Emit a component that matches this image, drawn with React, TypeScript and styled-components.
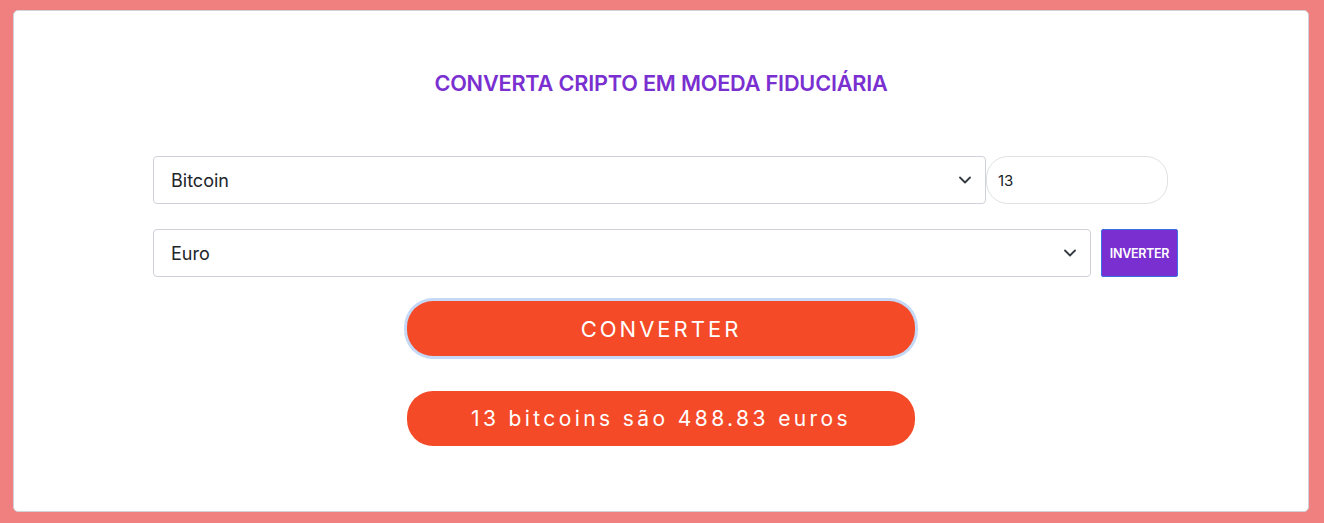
import React from "react";
import styled, { createGlobalStyle } from "styled-components";

const Global = createGlobalStyle`
  html, body { margin: 0; padding: 0; }
  body {
    background: #f08080;
    font-family: Inter, "Noto Sans", sans-serif;
  }
`;

const Page = styled.div`
  padding: 10px 15px 11px 13px;
  height: 523px;
  box-sizing: border-box;
`;

const Card = styled.main`
  background: #fff;
  border: 1px solid #cfd2d6;
  border-radius: 5px;
  height: 100%;
  box-sizing: border-box;
  display: flex;
  flex-direction: column;
  align-items: center;
  padding-top: 59px;
`;

const Heading = styled.h1`
  margin: 0;
  font-size: 21.7px;
  line-height: 26px;
  font-weight: 600;
  color: #7a2fd0;
  letter-spacing: -0.2px;
`;

const Form = styled.div`
  align-self: flex-start;
  margin-left: 139px;
  width: 1015px;
  margin-top: 60px;
  display: flex;
  flex-direction: column;
  gap: 25px;
`;

const Row = styled.div<{ $w: number }>`
  display: flex;
  width: ${(p) => p.$w}px;
  gap: ${(p) => (p.$w > 1015 ? 10 : 0)}px;
`;

const SelectBox = styled.div<{ $w: number }>`
  width: ${(p) => p.$w}px;
  height: 48px;
  box-sizing: border-box;
  border: 1px solid #cfd2da;
  border-radius: 4px;
  display: flex;
  align-items: center;
  justify-content: space-between;
  padding: 0 14px 0 17px;
  font-size: 18px;
  color: #212529;
`;

const Amount = styled.div`
  width: 182px;
  height: 48px;
  box-sizing: border-box;
  border: 1px solid #dfe1e5;
  border-radius: 22px;
  display: flex;
  align-items: center;
  padding-left: 11px;
  font-size: 15px;
  color: #212529;
`;

const Invert = styled.button`
  width: 77px;
  height: 48px;
  background: #7a2fd0;
  border: 1px solid #3b6fe8;
  border-radius: 2px;
  color: #fff;
  font-family: Inter, sans-serif;
  font-size: 12.5px;
  font-weight: 600;
  letter-spacing: -0.3px;
  padding: 0;
`;

const Pill = styled.div<{ $focus?: boolean }>`
  width: 508px;
  height: 55px;
  box-sizing: border-box;
  background: #f44a28;
  border-radius: 26px;
  color: #fff;
  display: flex;
  align-items: center;
  justify-content: center;
  font-size: ${(p) => (p.$focus ? 22 : 21)}px;
  letter-spacing: ${(p) => (p.$focus ? 3 : 3.4)}px;
  box-shadow: ${(p) => (p.$focus ? "0 0 0 3px #c5d9f7" : "none")};
  margin-top: ${(p) => (p.$focus ? 24 : 35)}px;
`;

const Chevron = () => (
  <svg width="12" height="8" viewBox="0 0 12 8" fill="none">
    <path d="M1 1.5l5 5 5-5" stroke="#343a40" strokeWidth="1.8" strokeLinecap="round" strokeLinejoin="round" />
  </svg>
);

export default function App() {
  return (
    <>
      <Global />
      <Page>
        <Card>
          <Heading>CONVERTA CRIPTO EM MOEDA FIDUCIÁRIA</Heading>
          <Form>
            <Row $w={1015}>
              <SelectBox $w={833}>
                <span>Bitcoin</span>
                <Chevron />
              </SelectBox>
              <Amount>13</Amount>
            </Row>
            <Row $w={1025}>
              <SelectBox $w={938}>
                <span>Euro</span>
                <Chevron />
              </SelectBox>
              <Invert>INVERTER</Invert>
            </Row>
          </Form>
          <Pill $focus>CONVERTER</Pill>
          <Pill>13 bitcoins são 488.83 euros</Pill>
        </Card>
      </Page>
    </>
  );
}
